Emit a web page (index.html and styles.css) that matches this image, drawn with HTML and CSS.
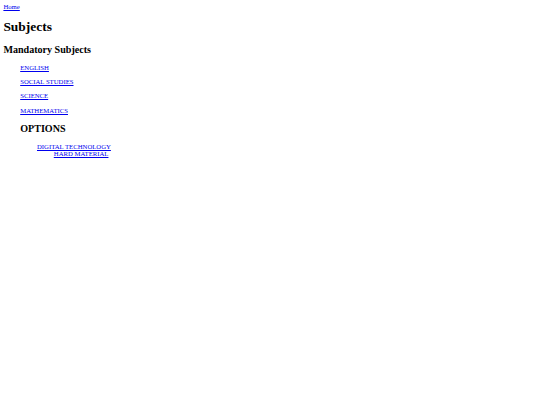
FILE: index.html
```html
<!DOCTYPE html>
<html>
<head>
<meta charset="utf-8">
<title>Subjects</title>
<link rel="stylesheet" href="styles.css">
</head>
<body>
<a class="link" href="#">Home</a>
<h1 class="title">Subjects</h1>
<h2 class="section">Mandatory Subjects</h2>
<ul class="list">
  <li><p class="item"><a class="link" href="#">ENGLISH</a></p></li>
  <li><p class="item"><a class="link" href="#">SOCIAL STUDIES</a></p></li>
  <li><p class="item"><a class="link" href="#">SCIENCE</a></p></li>
  <li><p class="item"><a class="link" href="#">MATHEMATICS</a></p></li>
  <li>
    <h2 class="section">OPTIONS</h2>
    <ul class="sublist">
      <li><a class="link" href="#">DIGITAL TECHNOLOGY</a>
        <ul class="sublist">
          <li><a class="link" href="#">HARD MATERIAL</a></li>
        </ul>
      </li>
    </ul>
  </li>
</ul>
</body>
</html>
```
FILE: styles.css
```css
html {
  background: #ffffff;
}
body {
  margin: 3.4px;
  font-family: "Liberation Serif", "Times New Roman", serif;
  font-size: 6.72px;
  line-height: 7.7px;
  color: #000000;
}
.link {
  color: #0000ee;
  text-decoration: underline;
}
.title {
  font-size: 13.44px;
  line-height: 15.5px;
  font-weight: bold;
  margin: 8px 0 9.7px;
}
.section {
  font-size: 10.08px;
  line-height: 11.6px;
  font-weight: bold;
  margin: 8.4px 0;
}
.list {
  list-style: none;
  margin: 6.4px 0;
  padding-left: 16.8px;
}
.sublist {
  list-style: none;
  margin: 0;
  padding-left: 16.8px;
}
.item {
  margin: 6.4px 0;
}
```
